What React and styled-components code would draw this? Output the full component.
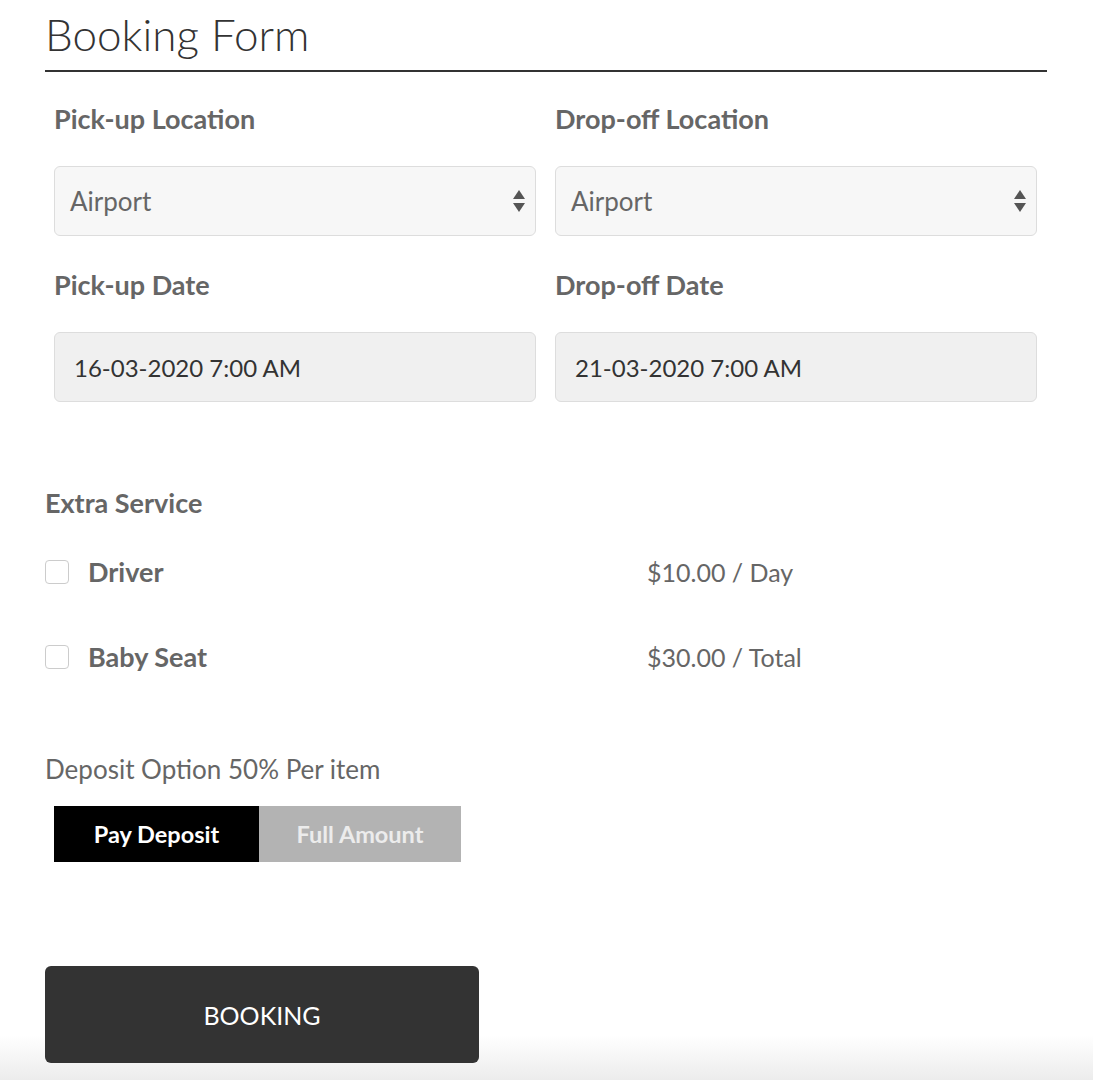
import styled, { createGlobalStyle } from "styled-components";

const GlobalStyle = createGlobalStyle`
  html, body {
    margin: 0;
    padding: 0;
  }
  body {
    font-family: Lato, "Liberation Sans", sans-serif;
    background: linear-gradient(to bottom, #fff 1035px, #ececec 1080px);
    min-height: 1080px;
    color: #666;
  }
`;

const Page = styled.div`
  width: 1002px;
  padding: 6px 0 0 45px;
`;

const Title = styled.h1`
  margin: 0;
  font-weight: 300;
  font-size: 44px;
  line-height: 56px;
  color: #333;
  padding-bottom: 8px;
  border-bottom: 2px solid #333;
`;

const FieldGrid = styled.div`
  display: grid;
  grid-template-columns: 482px 482px;
  column-gap: 19px;
  margin: 28px 0 0 9px;
`;

const Field = styled.div`
  display: flex;
  flex-direction: column;
  margin-bottom: ${(p) => p.bottom || 0}px;
`;

const Label = styled.label`
  font-weight: 700;
  font-size: 27px;
  line-height: 38px;
  color: #666;
  margin-bottom: 28px;
`;

const Select = styled.div`
  height: 68px;
  border: 1px solid #ddd;
  border-radius: 6px;
  background: #f7f7f7;
  display: flex;
  align-items: center;
  justify-content: space-between;
  padding: 0 9px 0 15px;
  font-size: 26px;
  color: #666;
`;

const DateBox = styled.div`
  height: 68px;
  border: 1px solid #ddd;
  border-radius: 6px;
  background: #f0f0f0;
  display: flex;
  align-items: center;
  padding: 0 19px;
  font-size: 24px;
  color: #333;
`;

const SectionTitle = styled.h3`
  margin: 83px 0 0;
  font-weight: 700;
  font-size: 27px;
  line-height: 36px;
  color: #666;
`;

const ServiceList = styled.div`
  margin-top: 32px;
  display: flex;
  flex-direction: column;
  gap: 48px;
`;

const ServiceRow = styled.div`
  display: grid;
  grid-template-columns: 602px 1fr;
  align-items: center;
  height: 37px;
`;

const CheckWrap = styled.label`
  display: flex;
  align-items: center;
  gap: 19px;
  font-weight: 700;
  font-size: 27px;
  color: #666;
`;

const Box = styled.span`
  width: 22px;
  height: 22px;
  border: 1px solid #ccc;
  border-radius: 4px;
  background: #fff;
`;

const Price = styled.span`
  font-size: 25px;
  color: #666;
`;

const DepositText = styled.p`
  margin: 76px 0 0;
  font-size: 26px;
  line-height: 36px;
  color: #666;
`;

const Toggle = styled.div`
  display: flex;
  margin: 19px 0 0 9px;
`;

const ToggleBtn = styled.button`
  width: ${(p) => p.width}px;
  height: 56px;
  border: none;
  font-family: inherit;
  font-weight: 700;
  font-size: 23.5px;
  background: ${(p) => (p.active ? "#000" : "#b3b3b3")};
  color: ${(p) => (p.active ? "#fff" : "#ececec")};
`;

const BookButton = styled.button`
  margin-top: 104px;
  width: 434px;
  height: 97px;
  border: none;
  border-radius: 6px;
  background: #333;
  color: #fff;
  font-family: inherit;
  font-size: 25px;
`;

function Arrows() {
  return (
    <svg width="14" height="26" viewBox="0 0 14 26">
      <path d="M7 2 L13 11 L1 11 Z" fill="#555" />
      <path d="M7 24 L13 15 L1 15 Z" fill="#555" />
    </svg>
  );
}

const services = [
  { name: "Driver", price: "$10.00 / Day" },
  { name: "Baby Seat", price: "$30.00 / Total" },
];

export default function App() {
  return (
    <Page>
      <GlobalStyle />
      <Title>Booking Form</Title>
      <FieldGrid>
        <Field bottom={30}>
          <Label>Pick-up Location</Label>
          <Select>
            Airport
            <Arrows />
          </Select>
        </Field>
        <Field bottom={30}>
          <Label>Drop-off Location</Label>
          <Select>
            Airport
            <Arrows />
          </Select>
        </Field>
        <Field>
          <Label>Pick-up Date</Label>
          <DateBox>16-03-2020 7:00 AM</DateBox>
        </Field>
        <Field>
          <Label>Drop-off Date</Label>
          <DateBox>21-03-2020 7:00 AM</DateBox>
        </Field>
      </FieldGrid>

      <SectionTitle>Extra Service</SectionTitle>
      <ServiceList>
        {services.map((s) => (
          <ServiceRow key={s.name}>
            <CheckWrap>
              <Box />
              {s.name}
            </CheckWrap>
            <Price>{s.price}</Price>
          </ServiceRow>
        ))}
      </ServiceList>

      <DepositText>Deposit Option 50% Per item</DepositText>
      <Toggle>
        <ToggleBtn active width={205}>Pay Deposit</ToggleBtn>
        <ToggleBtn width={202}>Full Amount</ToggleBtn>
      </Toggle>

      <BookButton>BOOKING</BookButton>
    </Page>
  );
}
